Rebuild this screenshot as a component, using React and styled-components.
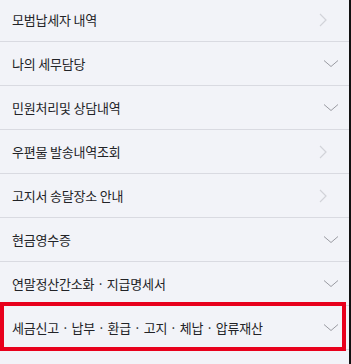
import React from 'react';
import styled, { createGlobalStyle } from 'styled-components';

const GlobalStyle = createGlobalStyle`
    html, body {
        margin: 0;
        padding: 0;
        background: #f2f3f8;
        overflow: hidden;
    }
    body {
        font-family: "Noto Sans CJK KR", "Noto Sans", sans-serif;
    }
`;

const items = [
    { label: '모범납세자 내역', icon: 'right' },
    { label: '나의 세무담당', icon: 'down' },
    { label: '민원처리및 상담내역', icon: 'down' },
    { label: '우편물 발송내역조회', icon: 'right' },
    { label: '고지서 송달장소 안내', icon: 'right' },
    { label: '현금영수증', icon: 'down' },
    { label: '연말정산간소화 · 지급명세서', icon: 'down' },
    { label: '세금신고 · 납부 · 환급 · 고지 · 체납 · 압류재산', icon: 'down', active: true },
];

const ChevronRight = () => (
    <svg width="8" height="14" viewBox="0 0 8 14" fill="none">
        <path d="M1 1L7 7L1 13" stroke="#d2d3d9" strokeWidth="1.2" />
    </svg>
);

const ChevronDown = () => (
    <svg width="16" height="9" viewBox="0 0 16 9" fill="none">
        <path d="M1 1.5L8 7.5L15 1.5" stroke="#9a9ba2" strokeWidth="1" />
    </svg>
);

const App = () => {
    return (
        <>
            <GlobalStyle />
            <Screen>
                <MenuList>
                    {items.map((item) => (
                        <MenuRow key={item.label} $active={item.active}>
                            <Label>{item.label}</Label>
                            <IconBox $kind={item.icon}>
                                {item.icon === 'right' ? <ChevronRight /> : <ChevronDown />}
                            </IconBox>
                        </MenuRow>
                    ))}
                </MenuList>
            </Screen>
        </>
    );
};

export default App;

const Screen = styled.div`
    width: 349px;
    height: 364px;
    border-right: 2px solid #111;
    background: #f2f3f8;
    overflow: hidden;
`;

const MenuList = styled.ul`
    list-style: none;
    margin: -2px 0 0;
    padding: 0;
`;

const MenuRow = styled.li`
    position: relative;
    height: 43px;
    border-bottom: 1px solid #d9dae1;
    display: flex;
    align-items: center;
    justify-content: space-between;
    padding: 0 10px 0 12px;

    ${({ $active }) => $active && `
        &::after {
            content: '';
            position: absolute;
            top: -4px;
            left: 0;
            right: 3px;
            bottom: -2px;
            border: 4px solid #e8001c;
            pointer-events: none;
        }
    `}
`;

const Label = styled.span`
    font-size: 13px;
    color: #222327;
    letter-spacing: -0.2px;
`;

const IconBox = styled.span`
    display: flex;
    align-items: center;
    justify-content: center;
    width: 16px;
    margin-right: ${({ $kind }) => ($kind === 'right' ? '8px' : '0')};
`;
